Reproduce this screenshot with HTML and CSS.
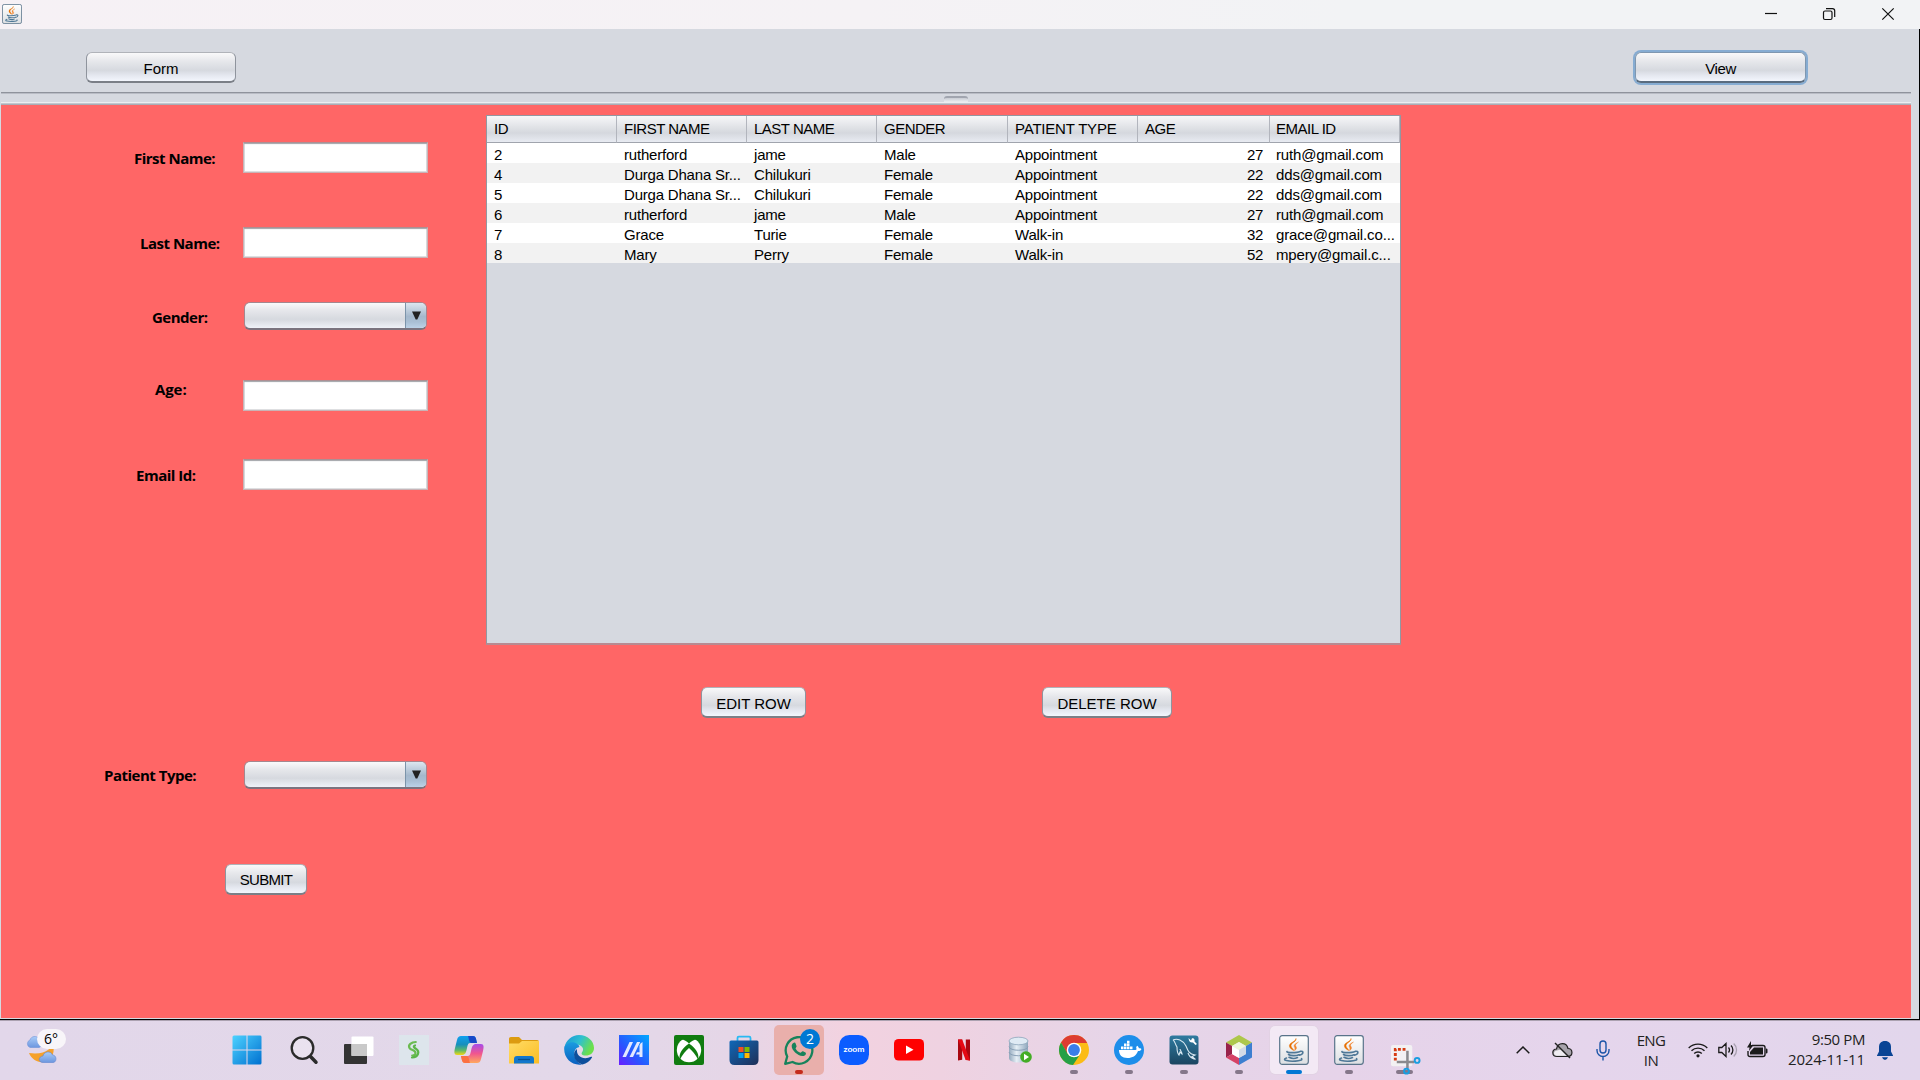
FILE: index.html
```html
<!DOCTYPE html>
<html lang="en">
<head>
<meta charset="utf-8">
<title>Patient Records</title>
<link rel="stylesheet" href="styles.css">
</head>
<body>
<svg class="defs" width="0" height="0" aria-hidden="true">
  <defs>
    <linearGradient id="plate" x1="0" y1="0" x2="0" y2="1"><stop offset="0" stop-color="#fff"/><stop offset="1" stop-color="#dcdfe2"/></linearGradient>
    <linearGradient id="win" x1="0" y1="0" x2="1" y2="1"><stop offset="0" stop-color="#4dd2ff"/><stop offset="1" stop-color="#0070d0"/></linearGradient>
    <linearGradient id="cloud" x1="0" y1="0" x2="0" y2="1"><stop offset="0" stop-color="#a9ccf8"/><stop offset="1" stop-color="#6d97df"/></linearGradient>
    <linearGradient id="cpA" x1="0" y1="0" x2="0" y2="1"><stop offset="0" stop-color="#0fa0f0"/><stop offset=".45" stop-color="#178fbd"/><stop offset=".75" stop-color="#5cb86a"/><stop offset="1" stop-color="#f3d813"/></linearGradient>
    <linearGradient id="cpB" x1="0" y1="0" x2="0" y2="1"><stop offset="0" stop-color="#a64bea"/><stop offset=".5" stop-color="#f0568f"/><stop offset="1" stop-color="#ffa95e"/></linearGradient>
    <linearGradient id="folder" x1="0" y1="0" x2="1" y2="1"><stop offset="0" stop-color="#ffdc66"/><stop offset="1" stop-color="#fbbd24"/></linearGradient>
    <linearGradient id="edgeA" x1="0" y1="0" x2="1" y2=".4"><stop offset="0" stop-color="#1593d8"/><stop offset=".55" stop-color="#2fc0d0"/><stop offset="1" stop-color="#6ce04b"/></linearGradient>
    <linearGradient id="edgeB" x1="0" y1="0" x2="0" y2="1"><stop offset="0" stop-color="#1a9be0"/><stop offset="1" stop-color="#0a5fc0"/></linearGradient>
    <linearGradient id="asus" x1="0" y1="1" x2="1" y2="0"><stop offset="0" stop-color="#6a1cff"/><stop offset=".4" stop-color="#2a55ff"/><stop offset="1" stop-color="#00a8ff"/></linearGradient>
    <linearGradient id="store" x1="0" y1="0" x2="1" y2="1"><stop offset="0" stop-color="#0f68b8"/><stop offset="1" stop-color="#1f2f57"/></linearGradient>
    <linearGradient id="mysql" x1="0" y1="0" x2="0" y2="1"><stop offset="0" stop-color="#2f7ba0"/><stop offset="1" stop-color="#1b4560"/></linearGradient>
    <linearGradient id="db" x1="0" y1="0" x2="1" y2="0"><stop offset="0" stop-color="#93a9bd"/><stop offset=".4" stop-color="#e6eff6"/><stop offset="1" stop-color="#8ea6bc"/></linearGradient>
    <symbol id="java" viewBox="0 0 30 30">
      <rect x=".7" y=".7" width="28.6" height="28.6" rx="2.5" fill="url(#plate)" stroke="#59748a" stroke-width="1.2"/>
      <path d="M17 3.500c1 3-5.500 4.500-5 7.500.2 1.700 2.300 2.600 2.700 4.500-2.200-1.200-4.500-2.700-4.300-5 .3-3.200 6.400-3.600 6.600-7z" fill="#e76f00" stroke="#e76f00" stroke-width=".5"/>
      <path d="M19.500 7c-3 1.500-5 2.700-4.300 4.600.5 1.200 1.300 2 .2 4 3-1.600 2.200-3.300 1.300-4.500-.8-1.200.5-2.500 2.800-4.100z" fill="#f08228" stroke="#f08228" stroke-width=".4"/>
      <g fill="none" stroke="#4f7897" stroke-width="1.600" stroke-linecap="round">
        <path d="M8 16.500c-1 1.500 10 1.500 13 0M9.500 19.500c2 1.500 8 1.400 10.500.2M10 22.300c2.500 1.300 6.500 1.200 8.500.2M21.300 16.300c3.700-.8 3.500 3-1 3.900M7.500 23c-6 2.200 3 3.600 9 3.100 3.500-.2 7.500-1 6-2.400"/>
      </g>
    </symbol>
  </defs>
</svg>

<div class="screen">
  <header class="titlebar">
    <svg class="app-icon" viewBox="0 0 30 30"><use href="#java"/></svg>
    <div class="window-controls">
      <svg width="14" height="14" viewBox="0 0 14 14"><path d="M1 6.500h12"/></svg>
      <svg width="14" height="14" viewBox="0 0 14 14"><rect x="1.500" y="4" width="8.500" height="8.500" rx="1.500"/><path d="M4 1.600h6.500a2.200 2.200 0 0 1 2.200 2.200V10"/></svg>
      <svg width="14" height="14" viewBox="0 0 14 14"><path d="M1.300 1.300l11.400 11.400M12.700 1.300L1.300 12.700"/></svg>
    </div>
  </header>

  <div class="window">
    <div class="content">
      <nav class="toolbar">
        <button class="btn btn-form">Form</button>
        <button class="btn btn-view">View</button>
      </nav>
      <div class="divider"><span class="grip"></span></div>
      <main class="panel">
        <form class="form">
          <div class="field first"><label>First Name:</label><div class="input"></div></div>
          <div class="field last"><label>Last Name:</label><div class="input"></div></div>
          <div class="field gender"><label>Gender:</label><div class="combo"><span><svg width="9" height="9" viewBox="0 0 9 9"><path d="M0 .5h9L5.300 8.500H3.700z" fill="#222"/></svg></span></div></div>
          <div class="field age"><label>Age:</label><div class="input"></div></div>
          <div class="field email"><label>Email Id:</label><div class="input"></div></div>
          <div class="field ptype"><label>Patient Type:</label><div class="combo"><span><svg width="9" height="9" viewBox="0 0 9 9"><path d="M0 .5h9L5.300 8.500H3.700z" fill="#222"/></svg></span></div></div>
          <button type="button" class="btn btn-submit">SUBMIT</button>
        </form>
        <section class="records">
          <div class="table-box">
            <table>
              <colgroup><col class="c1"><col class="c2"><col class="c2"><col class="c3"><col class="c2"><col class="c4"><col class="c5"></colgroup>
              <thead><tr><th>ID</th><th>FIRST NAME</th><th>LAST NAME</th><th>GENDER</th><th class="wide">PATIENT TYPE</th><th>AGE</th><th class="mail">EMAIL ID</th></tr></thead>
              <tbody>
                <tr><td>2</td><td>rutherford</td><td>jame</td><td>Male</td><td>Appointment</td><td class="num">27</td><td class="mail">ruth@gmail.com</td></tr>
                <tr><td>4</td><td>Durga Dhana Sr...</td><td>Chilukuri</td><td>Female</td><td>Appointment</td><td class="num">22</td><td class="mail">dds@gmail.com</td></tr>
                <tr><td>5</td><td>Durga Dhana Sr...</td><td>Chilukuri</td><td>Female</td><td>Appointment</td><td class="num">22</td><td class="mail">dds@gmail.com</td></tr>
                <tr><td>6</td><td>rutherford</td><td>jame</td><td>Male</td><td>Appointment</td><td class="num">27</td><td class="mail">ruth@gmail.com</td></tr>
                <tr><td>7</td><td>Grace</td><td>Turie</td><td>Female</td><td>Walk-in</td><td class="num">32</td><td class="mail">grace@gmail.co...</td></tr>
                <tr><td>8</td><td>Mary</td><td>Perry</td><td>Female</td><td>Walk-in</td><td class="num">52</td><td class="mail">mpery@gmail.c...</td></tr>
              </tbody>
            </table>
          </div>
          <div class="row-actions">
            <button class="btn btn-edit">EDIT ROW</button>
            <button class="btn btn-delete">DELETE ROW</button>
          </div>
        </section>
      </main>
    </div>
  </div>

  <footer class="taskbar">
    <div class="weather">
      <svg width="31" height="30" viewBox="0 0 31 30">
        <path d="M26 6c1 8-7 14-23 12 3 8 13 12 20 7 5-4 6-12 3-19z" fill="#f5a12b"/>
        <path d="M4 12.500a4 4 0 0 1 0-7.500C5 1 11 0 13 4c4 0 4 8 0 8.500z" fill="url(#cloud)" stroke="#6f94d8" stroke-width=".6"/>
        <path d="M17 27.500c-5 0-5-6 0-6.500 1-5 8-5.500 9.500-1C31 20 31 27.500 27 27.500z" fill="url(#cloud)" stroke="#5e85d0" stroke-width=".6"/>
      </svg>
      <span class="temp">6°</span>
    </div>
    <div class="apps">
      <div class="app start"><svg viewBox="0 0 30 30"><g fill="url(#win)"><path d="M.5 2a1.500 1.500 0 0 1 1.500-1.500h12.500v14H.5zM15.500.5H28A1.500 1.500 0 0 1 29.500 2v12.500h-14zM.5 15.500h14v14H2A1.500 1.500 0 0 1 .5 28zM15.500 15.500h14V28a1.500 1.500 0 0 1-1.500 1.500H15.500z"/></g></svg></div>
      <div class="app"><svg viewBox="0 0 30 30" fill="none" stroke="#2b2b2b" stroke-linecap="round"><circle cx="13.500" cy="13" r="10.800" fill="#ffffff44" stroke-width="2.300"/><path d="M21.500 21.500l5.500 5.700" stroke-width="3.500"/></svg></div>
      <div class="app view"><svg viewBox="0 0 30 30"><rect y="9" width="23" height="20" rx="1" fill="#343434"/><rect x="7.500" y="1.500" width="22" height="19.500" rx="1" fill="#fff"/><path d="M7.500 9H23v12H7.500z" fill="#c9c9c9"/></svg></div>
      <div class="app"><svg viewBox="0 0 30 30"><path fill="#dde5ec" d="M0 0h30v30H0z"/><path d="M16.800 7c-4.500 0-8 3-6.300 6 1.500 2.600 6 1.800 6 5 0 1.700-1.600 2.800-3.300 2.500" fill="none" stroke="#6abb50" stroke-width="2.200" stroke-linecap="round"/><path d="M16 10.500c-2 .6-1.200 2 .8 3.200 4.500 3 2.500 8.300-3.800 8.800" fill="none" stroke="#5bb548" stroke-width="2.200" stroke-linecap="round"/></svg></div>
      <div class="app"><svg viewBox="0 0 30 30"><path d="M7 1h12c3 0 3 3 4 7h-6c-3 0-3 1-4 5-1 5-2 7-5 7H3c-3 0-3-3-2-7L3 5c.7-3 2-4 4-4z" fill="url(#cpA)"/><path d="M14 1h5c3 0 3 3 4 7h-5c-2 0-2.500-1-3-3s-.5-3-1-4z" fill="#1748c8"/><path d="M23 28H11c-3 0-3-3-4-7h6c3 0 3-1 4-5 1-5 2-7 5-7h5c3 0 3 3 2 7l-2 8c-.7 3-2 4-4 4z" fill="url(#cpB)"/><path d="M16 28h-5c-3 0-3-3-4-7h5c2 0 2.500 1 3 3s.5 3 1 4z" fill="#fb7043"/></svg></div>
      <div class="app"><svg viewBox="0 0 30 30"><path d="M0 4c0-1.300.7-2 2-2h8l3 3h15c1.300 0 2 .7 2 2v6H0z" fill="#dc9b10"/><path d="M0 8.500h10L13 6h17v22.500H0z" fill="url(#folder)"/><path d="M5 28.500V24c0-2 1-3 3-3h14c2 0 3 1 3 3v4.500z" fill="#1277cc"/><path d="M9 24.500h12" stroke="#07518f" stroke-width="1.300"/></svg></div>
      <div class="app"><svg viewBox="0 0 30 30"><path d="M.5 12C2 5 8 0 15 0c8.500 0 15 6 15 13 0 5-4 7.500-8 7.500-5 0-5-2-3.500-4 2-3-1-7-6-7-6 0-11 2.500-12 2.500z" fill="url(#edgeA)"/><path d="M.3 12c3-5 9-6 13-3 1.500 1 2 2 2 3-4 1-5 4-5 7 0 6 5 10 8 10.500C8 31.500-1 23 .3 12z" fill="url(#edgeB)"/><path d="M13 14c-5 3-4 13 5.500 15.500 4-.8 7.500-3.500 9.500-7 .3-.8-.3-1-1-.7-7 3.500-15 .2-14-7.800z" fill="#0d4f9c"/></svg></div>
      <div class="app"><svg viewBox="0 0 30 30"><path fill="url(#asus)" d="M0 0h30v30H0z"/><path d="M3.500 22L10.500 7H14L7 22zM10.500 22l7.500-15h3.200L14 22zM21.500 8.500L23.500 7V22h-3v-2.500H17l1-2.200h2.500V10.500z" fill="#e3e8ff"/></svg></div>
      <div class="app"><svg viewBox="0 0 30 30"><rect width="30" height="30" rx="2" fill="#107c10"/><circle cx="15" cy="15" r="12.200" fill="#fff"/><path d="M7 4.500c3 0 6 2 8 4 2-2 5-4 8-4l-3-2.700H10zM12.300 10.500C7 15 4.500 20 6 24.500 8 20 12 15.500 15 13c3 2.500 7 7 9 11.500 1.500-4.500-1-9.500-6.300-14L15 8.500z" fill="#107c10"/></svg></div>
      <div class="app store"><svg viewBox="0 0 30 30"><path d="M8.500 7V3q0-1.300 1.300-1.300h10.400q1.300 0 1.300 1.300v4" fill="none" stroke="#29b9f2" stroke-width="1.800"/><path d="M.5 7q0-1.500 1.500-1.500h26q1.500 0 1.500 1.500v18q0 5-5 5h-19q-5 0-5-5z" fill="url(#store)"/><path fill="#f25022" d="M9.500 12h5v5h-5z"/><path fill="#7fba00" d="M15.500 12h5v5h-5z"/><path fill="#00a4ef" d="M9.500 18h5v5h-5z"/><path fill="#ffb900" d="M15.500 18h5v5h-5z"/></svg></div>
      <div class="app alert"><svg viewBox="0 0 30 30" fill="none" stroke="#16835b"><path d="M1.200 28.800l2-7.300A13.300 13.300 0 1 1 8.500 27z" stroke-width="2.300" stroke-linejoin="round"/><path d="M9 8.200c1.500-1 2.300-.7 2.800.7l.7 2c.4 1-.9 1.700-.9 2.500 1 2 2.700 3.600 4.800 4.300 1-.3 1.500-1.900 2.600-1.500l2.500 1.200c1 .6.3 2.400-.8 3.100-5 2.500-13.300-5-13-9.500 0-1.200.5-2.100 1.300-2.800z" fill="#16835b" stroke="none"/></svg><span class="badge">2</span><i class="mark red"></i></div>
      <div class="app"><svg viewBox="0 0 30 30"><rect width="30" height="30" rx="10.500" fill="#0b5cff"/><text x="15" y="17.300" text-anchor="middle" textLength="21" lengthAdjust="spacingAndGlyphs" class="zoom-word">zoom</text></svg></div>
      <div class="app"><svg viewBox="0 0 30 30"><rect y="4" width="30" height="21.500" rx="4.500" fill="#f00"/><path d="M12 10.500v8.500l7.500-4.200z" fill="#fff"/></svg></div>
      <div class="app"><svg viewBox="0 0 30 30"><path d="M9 4.500h4.200v20.300L9 25.500zM16.800 4.500H21v21l-4.200-.7z" fill="#a90710"/><path d="M9 4.500h4.200L21 25.500l-4.400-.6z" fill="#e50914"/></svg></div>
      <div class="app"><svg viewBox="0 0 30 30"><path d="M5 6v17c0 6 19 6 19 0V6z" fill="url(#db)"/><ellipse cx="14.500" cy="6" rx="9.500" ry="3.800" fill="#dfeaf4" stroke="#8ca4ba" stroke-width=".8"/><path d="M5 11.500c0 5 19 5 19 0M5 17c0 5 19 5 19 0" fill="none" stroke="#8aa1b7"/><circle cx="22" cy="22" r="5.800" fill="#43ad25"/><path d="M20 18.800v6.400l5-3.200z" fill="#fff"/></svg></div>
      <div class="app"><svg viewBox="0 0 30 30"><circle cx="15" cy="15" r="15" fill="#fbbc16"/><path d="M2 7.500A15 15 0 0 1 28.200 8H15l-6.500 11z" fill="#dd3c31"/><path d="M2 7.500L8.800 19 15 22l5-1-6 9A15 15 0 0 1 2 7.500z" fill="#26a047"/><circle cx="15" cy="15" r="7.300" fill="#fff"/><circle cx="15" cy="15" r="5.900" fill="#3b7ee9"/></svg><i class="mark"></i></div>
      <div class="app"><svg viewBox="0 0 30 30"><circle cx="15" cy="15" r="15" fill="#1d8eea"/><path d="M5 15h16.500c1 0 1.300-.6.700-2.200 0-1 .5-1.500 1-2 1 .7 1.500 1.500 1.700 2.500 1 0 2 .1 2.600.6-.6 1.600-2 2.100-3.500 2.100C22 21 18.500 23 13.500 23 8 23 5 20 5 15z" fill="#fff"/><path d="M7 11.500h2.500v2.800H7zM10 11.500h2.500v2.800H10zM13 11.500h2.500v2.800H13zM16 11.500h2.500v2.800H16zM10 8.500h2.500v2.600H10zM13 8.500h2.500v2.600H13zM13 5.800h2.500v2.400H13z" fill="#fff"/></svg><i class="mark"></i></div>
      <div class="app"><svg viewBox="0 0 30 30"><rect x=".5" y=".5" width="29" height="29" rx="3" fill="url(#mysql)"/><path d="M4 5c4-2 10 0 13 6 2 5 3 8 9 9l-3 1.500 3.500 3M4 5c2 1 2 4 4 7 0 3 0 6 2 8l1-3 2 2c0-2-2-4-2-5M19 18c1 3 3 5 6 6" fill="none" stroke="#d9e9f2" stroke-width="1.100"/><path d="M19.500 3l2.500 2.500 1-2.300c3 0 2.500 2 2.500 3.300L28 9l-1.500 1-2.500-2.500c-3 .3-4-1-4.500-4.500z" fill="#fff"/></svg><i class="mark"></i></div>
      <div class="app"><svg viewBox="0 0 30 30"><path d="M15 0l13 7.500L22 11l-7-4-7 4-6-3.500z" fill="#adc74b"/><path d="M2 7.500L8 11v8l-6 3.500z" fill="#98234b"/><path d="M2 22.500L8 19l7 4v7z" fill="#d54266"/><path d="M28 7.500L22 11v8l-7 4v7l13-7.500z" fill="#3d7fd0"/><path d="M8 11l7-4 7 4-7 4z" fill="#f0f7dc"/><path d="M8 11l7 4v8l-7-4z" fill="#fff"/><path d="M22 11l-7 4v8l7-4z" fill="#d2dbe7"/></svg><i class="mark"></i></div>
      <div class="app active"><svg viewBox="0 0 30 30"><use href="#java"/></svg><i class="mark blue"></i></div>
      <div class="app"><svg viewBox="0 0 30 30"><use href="#java"/></svg><i class="mark"></i></div>
      <div class="app snip"><i class="mark wide"></i><svg viewBox="0 0 32 32"><rect x="1" y="1" width="22" height="22" rx="2" fill="#f3f1f3"/><path d="M16 5.500H5.500V17" fill="none" stroke="#d63b12" stroke-width="3" stroke-dasharray="3 1.800"/><path d="M18 7v18M7 18.500h18" stroke="#8a8a8e" stroke-width="2.600"/><g fill="none" stroke="#1a9ee0" stroke-width="2"><circle cx="28" cy="17" r="2.500"/><circle cx="17" cy="28" r="2.500"/></g></svg></div>
    </div>
    <div class="tray">
      <svg class="t-chev" width="14" height="8" viewBox="0 0 14 8" fill="none" stroke="#1b1b1b" stroke-width="1.500"><path d="M.7 7.200L7 1l6.300 6.200"/></svg>
      <svg class="t-cloud" width="21" height="18" viewBox="0 0 21 18"><path d="M5 15.500C-.5 15.500-.5 8 4.500 8 6 1 14.500 1 16 7.500c5 0 5.500 8 0 8z" fill="#a7a3ab" stroke="#222" stroke-width="1.200"/><path d="M5 14.800c-3.500 0-4-4-1-5L9 8.500l6 6.300z" fill="#f0edf2"/><path d="M3 2l15 15" stroke="#222" stroke-width="1.400"/></svg>
      <svg class="t-mic" width="14" height="21" viewBox="0 0 14 21" fill="none" stroke="#1c55a8" stroke-width="1.400"><rect x="4" y="1" width="6" height="12" rx="3"/><path d="M1 9v1.500a6 6 0 0 0 12 0V9M7 16.500v4"/></svg>
      <div class="lang"><span>ENG</span><span>IN</span></div>
      <svg class="t-wifi" width="20" height="16" viewBox="0 0 20 16" fill="none" stroke="#1b1b1b" stroke-width="1.400"><path d="M.7 6a13.200 13.200 0 0 1 18.600 0M3.500 8.800a9.200 9.200 0 0 1 13 0M6.200 11.500a5.400 5.400 0 0 1 7.600 0"/><circle cx="10" cy="13.800" r="1.600" fill="#1b1b1b" stroke="none"/></svg>
      <svg class="t-vol" width="20" height="16" viewBox="0 0 20 16" fill="none" stroke="#1b1b1b" stroke-width="1.300"><path d="M.8 5.500h3L8 1.500v13L3.800 10.500h-3zM10.500 5.500c1.200 1.500 1.200 3.500 0 5M13 3.500c2.500 2.500 2.500 6.500 0 9"/><path d="M15.700 1.500c3.800 3.500 3.800 9.500 0 13" stroke="#a9a0b0"/></svg>
      <svg class="t-bat" width="21" height="17" viewBox="0 0 21 17"><path d="M5 4.500h11q2 0 2 2v7q0 2-2 2H3q-2 0-2-2V10" fill="none" stroke="#1b1b1b" stroke-width="1.400"/><path d="M7 6.500h9v7H3V11z" fill="#1b1b1b"/><path d="M19 7.500q1.500 0 1.500 1v3q0 1-1.500 1zM4 0L0 6.500h2.500L2 10l4.500-6H4z" fill="#1b1b1b"/></svg>
      <div class="clock"><span>9:50 PM</span><span class="date">2024-11-11</span></div>
      <svg class="t-bell" width="16" height="19" viewBox="0 0 16 19" fill="#0b4595"><path d="M8 0c4 0 6 2.500 6 6v4.500l2 4v.5H0v-.5l2-4V6c0-3.500 2-6 6-6zM5 16.200h6Q10 19 8 19t-3-2.800z"/></svg>
    </div>
  </footer>
</div>
</body>
</html>
```

FILE: styles.css
```css
* { box-sizing: border-box; }
body { margin: 0; background: #d6d9e0; overflow: hidden; color: #000; font-family: "Liberation Sans", Arial, sans-serif; }
.defs { display: block; width: 0; height: 0; }
.screen { width: 1920px; height: 1080px; display: flex; flex-direction: column; }

/* title bar */
.titlebar { height: 29px; display: flex; justify-content: space-between; background: linear-gradient(90deg, #f6f1f5 0%, #f5f2f5 45%, #f2f3f5 70%); }
.app-icon { width: 20px; height: 20px; margin: 4px 0 0 2px; }
.window-controls { display: flex; gap: 44px; padding: 7px 25px 0 0; }
.window-controls svg { fill: none; stroke: #111; stroke-width: 1.200; }
.window-controls svg:nth-child(2) { margin-right: 1px; }

/* window body */
.window { height: 991px; background: #d6d9e0; border-right: 1px solid #000; border-bottom: 1px solid #000; }
.content { width: 1911px; padding-left: 1px; height: 989px; display: flex; flex-direction: column; }
.toolbar { height: 65px; padding: 23px 105px 0 85px; display: flex; justify-content: space-between; border-bottom: 1px solid #b9bcc5; box-shadow: inset 0 -1px #8f939c; }
.divider { height: 11px; display: flex; justify-content: center; border-bottom: 1px solid #a9adb6; box-shadow: inset 0 -1px #c2c6cd, inset 0 -2px #eceef1; }
.grip { width: 24px; height: 6px; margin-top: 2px; border-radius: 3px 3px 0 0; border-top: 2px solid #a1a5af; background: linear-gradient(#c9ccd4, #eceef1); }

.btn { display: flex; align-items: center; justify-content: center; height: 31px; padding: 2px 0 0; white-space: nowrap; font: 15px "Liberation Sans", Arial, sans-serif; color: #000;
  border: 1px solid #8f949d; border-top-color: #b0b3b9; border-bottom: 2px solid #7b7f87; border-radius: 6px;
  background: linear-gradient(#f9f9fa 0%, #e6e7eb 30%, #d6d9df 62%, #e3e6ee 78%, #f3f6fd 100%); }
.btn-form { width: 150px; }
.btn-view { width: 171px; letter-spacing: -.4px; border-color: #7f97b0; border-bottom-color: #596b7e; box-shadow: 0 0 0 2px #86acd2; }
.btn-submit { width: 82px; margin: 74px 0 0 224px; padding-top: 1px; letter-spacing: -.7px; }
.btn-edit { width: 105px; }
.btn-delete { width: 130px; }

.panel { height: 913px; display: flex; background: #f66; }

/* form */
.form { width: 485px; padding-top: 37px; }
.field { display: grid; grid-template-columns: 242px 185px; height: 31px; align-items: start; }
.field label { height: 31px; white-space: nowrap; font: bold 15px/31px "Open Sans", "Noto Sans", sans-serif; letter-spacing: -.5px; }
.input { height: 31px; background: #fff; border: 1px solid #c9b3b6; border-top-color: #ad8f93; box-shadow: inset 0 1px 1px #a5a7ab, inset 0 0 0 1px #dedfe1; }
.combo { width: 183px; height: 28px; margin-left: 1px; display: flex; justify-content: flex-end; overflow: hidden; border: 1px solid #a4878f; border-bottom: 2px solid #7b747f; border-radius: 6px; background: linear-gradient(#fafafb, #e6e7eb 30%, #d6d9df 65%, #eff2f8); }
.combo span { width: 21px; height: 27px; display: flex; justify-content: center; padding-top: 8px; border-left: 1px solid #7c94aa; background: linear-gradient(#dce6ef, #a4b8cc 50%, #a9bfd4 70%, #c2d8ed); }
.first label { padding: 1px 0 0 133px; }
.last { margin-top: 54px; }
.last label { padding: 1px 0 0 139px; }
.gender { height: 29px; margin-top: 44px; }
.gender label { padding-left: 151px; }
.age { margin-top: 49px; }
.age label { padding-left: 154px; margin-top: -6px; letter-spacing: -.1px; }
.email { margin-top: 48px; }
.email label { padding: 1px 0 0 135px; }
.ptype { height: 29px; margin-top: 271px; }
.ptype label { padding-left: 103px; margin-top: -1px; }

/* records table */
.records { width: 916px; padding-top: 10px; }
.table-box { width: 915px; height: 530px; background: #d6d9e0; border: 1px solid #9297a1; border-bottom: 2px solid #b88a91; }
table { width: 913px; table-layout: fixed; border-collapse: separate; border-spacing: 0; white-space: nowrap; font-size: 15px; }
.c1 { width: 130px; }
.c2 { width: 130px; }
.c3 { width: 131px; }
.c4 { width: 132px; }
.c5 { width: 130px; }
th { height: 27px; padding: 0 0 1px 7px; line-height: 17px; text-align: left; font-weight: normal; letter-spacing: -.5px; border-right: 1px solid #b2b5bd; border-bottom: 1px solid #a0a4ad; background: linear-gradient(#f7f7f9, #e2e4e8 40%, #d5d8de 65%, #e8ebf2); }
th.wide { letter-spacing: -.2px; }
td { height: 20px; padding: 3px 0 0 7px; line-height: 17px; letter-spacing: -.2px; background: #fff; }
tr:nth-child(even) td { background: #f2f2f2; }
td.num { padding: 3px 7px 0 0; text-align: right; letter-spacing: -.3px; }
td.mail { padding-left: 6px; letter-spacing: -.14px; }
th.mail { padding-left: 6px; }
.row-actions { display: flex; gap: 236px; padding: 42px 0 0 215px; }

/* taskbar */
.taskbar { height: 60px; display: flex; border-top: 1px solid #aca2b1; background: linear-gradient(90deg, #e2d7ea 0%, #e3d8e9 30%, #e5d6e7 38%, #f2d2e0 44%, #efd2e1 49%, #e6d5e8 58%, #e6d3e9 70%, #e5d5ec 82%, #e2d6ec 100%); }
.weather { position: relative; width: 224px; padding: 14px 0 0 26px; }
.weather svg { display: block; }
.temp { position: absolute; left: 37px; top: 8px; width: 29px; height: 20px; padding-left: 7px; border-radius: 10px; background: #f8f5f9; font: 14px/20px "Open Sans", "Noto Sans", sans-serif; }
.apps { display: flex; gap: 5px; }
.app { position: relative; width: 50px; height: 50px; margin-top: 4px; display: flex; justify-content: center; align-items: center; border-radius: 5px; }
.app svg { width: 30px; height: 30px; }
.start svg { margin-left: -4px; }
.view svg, .store svg { margin-left: -1px; }
.alert { background: #e9afab; }
.active { width: 48px; height: 48px; margin: 5px 1px 0; background: #f3e9f5; box-shadow: 0 0 0 .5px #ddd0df; }
.badge { position: absolute; left: 26px; top: 4px; width: 20px; height: 20px; border-radius: 50%; background: #0078d4; color: #fff; text-align: center; font: 14px/19px "Open Sans", "Noto Sans", sans-serif; }
.mark { position: absolute; left: calc(50% - 4px); bottom: 1px; width: 8px; height: 4px; border-radius: 2px; background: #85778a; }
.mark.red { background: #c42b1c; }
.mark.blue { left: calc(50% - 8px); bottom: 0; width: 16px; background: #0078d4; }
.mark.wide { left: calc(50% - 8px); width: 17px; }
.snip svg { position: relative; width: 31px; height: 31px; margin: 19px 0 0 2px; }
.zoom-word { font: bold 8px "Lato", sans-serif; fill: #fff; }

.tray { flex: 1; display: flex; align-items: flex-start; padding-left: 87px; font: 15px/20px "Open Sans", "Noto Sans", sans-serif; color: #222; }
.tray svg { flex: none; }
.t-chev { margin-top: 25px; }
.t-cloud { margin: 20px 0 0 22px; }
.t-mic { margin: 19px 0 0 23px; }
.lang { width: 50px; margin: 9px 0 0 16px; display: flex; flex-direction: column; align-items: center; letter-spacing: -.6px; }
.t-wifi { margin: 21px 0 0 12px; }
.t-vol { margin: 21px 0 0 10px; }
.t-bat { margin: 20px 0 0 9px; }
.clock { width: 97px; margin-top: 8px; display: flex; flex-direction: column; align-items: flex-end; letter-spacing: -.4px; }
.clock .date { letter-spacing: -.12px; }
.t-bell { margin: 20px 0 0 12px; }
```
